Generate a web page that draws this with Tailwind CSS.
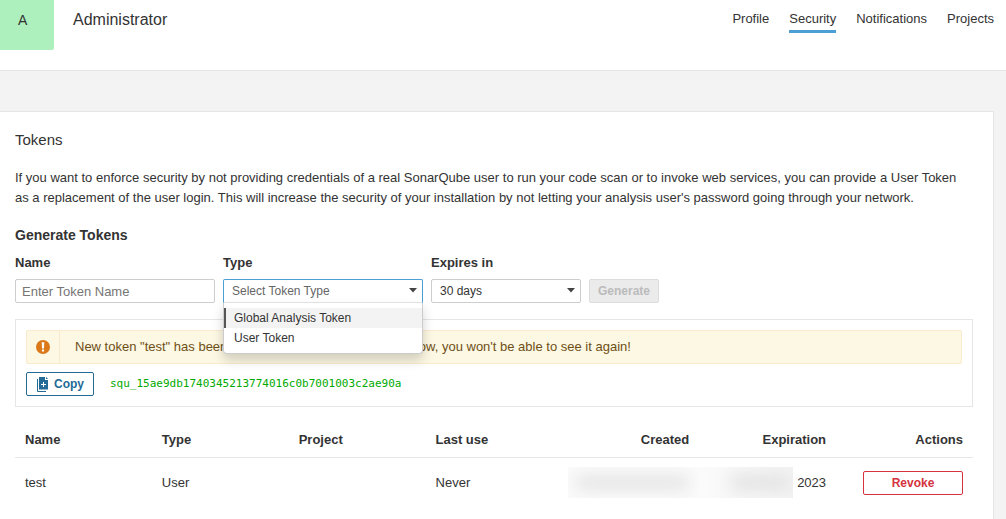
<!DOCTYPE html>
<html lang="en">
<head>
<meta charset="utf-8">
<meta name="viewport" content="width=device-width, initial-scale=1">
<title>Administrator - Security</title>
<script src="https://cdn.jsdelivr.net/npm/@tailwindcss/browser@4"></script>
</head>
<body class="min-h-screen overflow-x-hidden bg-[#f3f3f3] font-['Liberation_Sans',Arial,sans-serif] text-[13px] leading-5 text-[#333]">
  <header class="flex items-start justify-between border-b border-[#e6e6e6] bg-white pr-3 pb-5">
    <div class="flex items-start">
      <div class="flex h-[50px] w-[54px] items-center rounded-br-xs bg-[#adf0bd] pb-2.5 pl-[18px] text-sm">A</div>
      <h1 class="pt-2.5 pl-[19px] text-base leading-5">Administrator</h1>
    </div>
    <nav class="flex gap-5 pt-2" aria-label="Account">
      <a href="#" class="border-b-3 border-transparent pt-px pb-px">Profile</a>
      <a href="#" class="border-b-3 border-[#4b9fd5] pt-px pb-px" aria-current="page">Security</a>
      <a href="#" class="border-b-3 border-transparent pt-px pb-px">Notifications</a>
      <a href="#" class="border-b-3 border-transparent pt-px pb-px">Projects</a>
    </nav>
  </header>

  <main class="mt-10 mr-3 min-h-[calc(100vh-111px)] border-t border-r border-[#e6e6e6] bg-white pt-[18px] pr-5 pb-2 pl-[15px]">
    <h2 class="text-[15px] leading-5">Tokens</h2>
    <p class="mt-[18px]">If you want to enforce security by not providing credentials of a real SonarQube user to run your code scan or to invoke web services, you can provide a User Token as a replacement of the user login. This will increase the security of your installation by not letting your analysis user's password going through your network.</p>
    <h3 class="mt-[17px] text-sm leading-5 font-bold">Generate Tokens</h3>

    <form class="mt-2 flex items-end gap-2">
      <div class="flex w-50 flex-col gap-1.5">
        <label for="token-name" class="font-bold">Name</label>
        <input id="token-name" type="text" placeholder="Enter Token Name" class="h-6 rounded-xs border border-[#cdcdcd] px-1.5 text-[13px] placeholder:text-[#757575]">
      </div>
      <div class="flex w-50 flex-col gap-1.5">
        <label for="token-type" class="font-bold">Type</label>
        <div class="relative">
          <select id="token-type" class="block h-6 w-full appearance-none rounded-t-xs border border-[#4b9fd5] border-b-[#e6e6e6] bg-white px-2 text-xs text-[#666]">
            <option>Select Token Type</option>
          </select>
          <svg class="pointer-events-none absolute top-[9px] right-[5px] h-[5px] w-2.5" viewBox="0 0 10 5" fill="#444" aria-hidden="true"><path d="M1 0h8L5 4.5z"/></svg>
          <ul role="listbox" aria-label="Token type" class="absolute top-6 right-0 left-0 z-10 rounded-b border border-t-0 border-[#ccc] bg-white pt-[5px] pb-[5px] text-xs leading-5 shadow-[0_6px_12px_rgba(0,0,0,0.175)]">
            <li role="option" aria-selected="true" class="border-l-2 border-[#555] bg-[#f3f3f3] pl-2">Global Analysis Token</li>
            <li role="option" aria-selected="false" class="border-l-2 border-transparent pl-2">User Token</li>
          </ul>
        </div>
      </div>
      <div class="flex w-[150px] flex-col gap-1.5">
        <label for="token-expiry" class="font-bold">Expires in</label>
        <div class="relative">
          <select id="token-expiry" class="block h-6 w-full appearance-none rounded-xs border border-[#cdcdcd] bg-white px-2 text-xs text-[#333]">
            <option>30 days</option>
          </select>
          <svg class="pointer-events-none absolute top-[9px] right-[5px] h-[5px] w-2.5" viewBox="0 0 10 5" fill="#444" aria-hidden="true"><path d="M1 0h8L5 4.5z"/></svg>
        </div>
      </div>
      <button type="submit" disabled class="h-6 rounded-xs border border-[#ddd] bg-[#ebebeb] px-2 text-xs font-bold text-[#bbb]">Generate</button>
    </form>

    <section class="mt-4 border border-[#e6e6e6] p-2.5">
      <div role="alert" class="flex h-[34px] items-stretch rounded-xs border border-[#faebcc] bg-[#fcf8e3] text-[#6f4f17]">
        <div class="flex w-[33px] items-center justify-center border-r border-[#faebcc]">
          <svg class="h-3.5 w-3.5" viewBox="0 0 14 14" aria-hidden="true"><circle cx="7" cy="7" r="7" fill="#db781a"/><path d="M5.7 2.3h2.6L8 8.4H6z" fill="#fff"/><rect x="5.9" y="9.4" width="2.2" height="2.2" rx=".3" fill="#fff"/></svg>
        </div>
        <p class="flex items-center pl-[15px]">New token "test" has been created. Make sure you copy it now, you won't be able to see it again!</p>
      </div>
      <div class="mt-2 flex items-center gap-4">
        <button type="button" class="flex h-6 items-center gap-1 rounded-xs border border-[#236a97] px-[9px] text-xs font-bold text-[#236a97]">
          <svg class="h-4 w-3.5" viewBox="0 0 14 16" aria-hidden="true"><path d="M3 1h6v3h3v9.500H3z" fill="#236a97"/><path d="M10 1l2 2h-2z" fill="#236a97"/><path d="M1.500 3v12.500H10" fill="none" stroke="#236a97"/><path d="M7.500 6v5M5 8.500h5" stroke="#fff"/></svg>
          Copy
        </button>
        <code class="font-['DejaVu_Sans_Mono',monospace] text-[11px] text-[#0a0]">squ_15ae9db1740345213774016c0b7001003c2ae90a</code>
      </div>
    </section>

    <table class="mt-3.5 w-full table-fixed border-collapse">
      <thead>
        <tr class="border-b border-[#e6e6e6]">
          <th class="px-2.5 pt-[9px] pb-[7px] text-left">Name</th>
          <th class="px-2.5 pt-[9px] pb-[7px] text-left">Type</th>
          <th class="px-2.5 pt-[9px] pb-[7px] text-left">Project</th>
          <th class="px-2.5 pt-[9px] pb-[7px] text-left">Last use</th>
          <th class="px-2.5 pt-[9px] pb-[7px] text-right">Created</th>
          <th class="px-2.5 pt-[9px] pb-[7px] text-right">Expiration</th>
          <th class="px-2.5 pt-[9px] pb-[7px] text-right">Actions</th>
        </tr>
      </thead>
      <tbody>
        <tr class="h-[50px]">
          <td class="px-2.5">test</td>
          <td class="px-2.5">User</td>
          <td class="px-2.5"></td>
          <td class="px-2.5">Never</td>
          <td class="pl-1.5">
            <div class="h-[31px] overflow-hidden bg-[#fbfbfb] py-2 pr-2.5 pl-2"><div class="h-[15px] rounded bg-[#e4e4e4] blur-[8px]"></div></div>
          </td>
          <td class="pr-2.5">
            <div class="flex items-center justify-end gap-1">
              <div class="h-[31px] flex-1 overflow-hidden bg-linear-to-r from-[#fbfbfb] to-[#f3f3f3] py-2 pr-1 pl-8"><div class="h-[15px] rounded bg-[#e2e2e2] blur-[8px]"></div></div>
              <span>2023</span>
            </div>
          </td>
          <td class="px-2.5"><div class="flex justify-end"><button type="button" class="h-6 w-25 rounded-xs border border-[#d4333f] bg-white text-xs font-bold text-[#d4333f]">Revoke</button></div></td>
        </tr>
      </tbody>
    </table>
  </main>
</body>
</html>
